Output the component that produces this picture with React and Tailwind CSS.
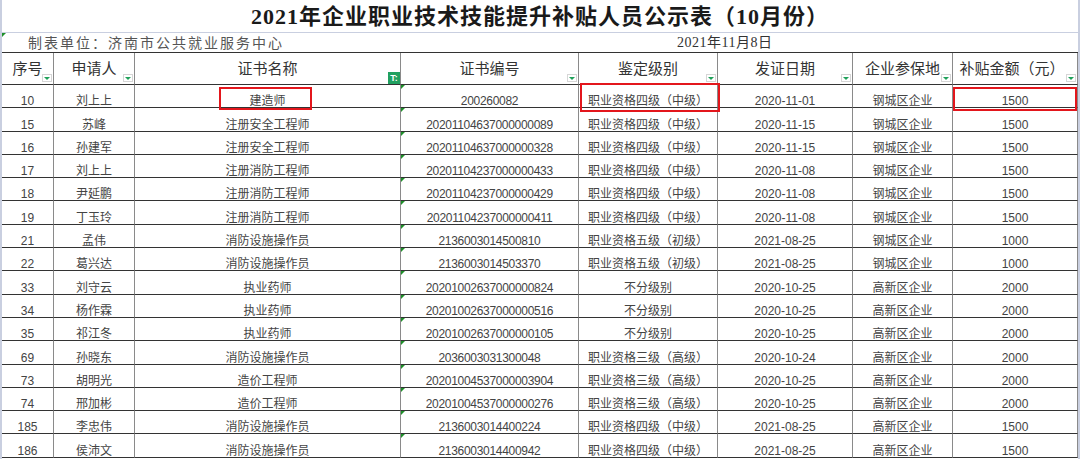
import React from 'react';

const cols = ['序号', '申请人', '证书名称', '证书编号', '鉴定级别', '发证日期', '企业参保地', '补贴金额（元）'];

const rows = [
  ['10', '刘上上', '建造师', '200260082', '职业资格四级（中级）', '2020-11-01', '钢城区企业', '1500'],
  ['15', '苏峰', '注册安全工程师', '20201104637000000089', '职业资格四级（中级）', '2020-11-15', '钢城区企业', '1500'],
  ['16', '孙建军', '注册安全工程师', '20201104637000000328', '职业资格四级（中级）', '2020-11-15', '钢城区企业', '1500'],
  ['17', '刘上上', '注册消防工程师', '20201104237000000433', '职业资格四级（中级）', '2020-11-08', '钢城区企业', '1500'],
  ['18', '尹延鹏', '注册消防工程师', '20201104237000000429', '职业资格四级（中级）', '2020-11-08', '钢城区企业', '1500'],
  ['19', '丁玉玲', '注册消防工程师', '20201104237000000411', '职业资格四级（中级）', '2020-11-08', '钢城区企业', '1500'],
  ['21', '孟伟', '消防设施操作员', '2136003014500810', '职业资格五级（初级）', '2021-08-25', '钢城区企业', '1000'],
  ['22', '葛兴达', '消防设施操作员', '2136003014503370', '职业资格五级（初级）', '2021-08-25', '钢城区企业', '1000'],
  ['33', '刘守云', '执业药师', '20201002637000000824', '不分级别', '2020-10-25', '高新区企业', '2000'],
  ['34', '杨作霖', '执业药师', '20201002637000000516', '不分级别', '2020-10-25', '高新区企业', '2000'],
  ['35', '祁江冬', '执业药师', '20201002637000000105', '不分级别', '2020-10-25', '高新区企业', '2000'],
  ['69', '孙晓东', '消防设施操作员', '2036003031300048', '职业资格三级（高级）', '2020-10-24', '高新区企业', '2000'],
  ['73', '胡明光', '造价工程师', '20201004537000003904', '职业资格三级（高级）', '2020-10-25', '高新区企业', '2000'],
  ['74', '邢加彬', '造价工程师', '20201004537000000276', '职业资格三级（高级）', '2020-10-25', '高新区企业', '2000'],
  ['185', '李忠伟', '消防设施操作员', '2136003014400224', '职业资格四级（中级）', '2021-08-25', '高新区企业', '1500'],
  ['186', '侯沛文', '消防设施操作员', '2136003014400942', '职业资格四级（中级）', '2021-08-25', '高新区企业', '1500'],
];

const grid = 'grid grid-cols-[52px_81px_266px_178px_139px_135px_100px_125px]';
const sans = { fontFamily: '"Liberation Sans", "Noto Sans CJK SC", sans-serif' };

// little green "number stored as text" flag
const Flag = ({ className = '' }) => (
  <span className={`absolute w-0 h-0 border-t-[4px] border-r-[4px] border-t-[#1f8f2a] border-r-transparent ${className}`}></span>
);

const FilterBtn = () => (
  <span className="absolute right-[1px] bottom-[2px] w-[10px] h-[8px] border border-[#d6d6d6] bg-white flex items-center justify-center">
    <span className="w-0 h-0 border-l-[3px] border-r-[3px] border-t-[3px] border-l-transparent border-r-transparent border-t-[#20a15a]"></span>
  </span>
);

export default function App() {
  return (
    <div
      className="relative w-[1080px] h-[459px] overflow-hidden bg-white border-l-2 border-r-2 border-[#c9cfe0] text-[#333]"
      style={sans}
    >
      {/* title */}
      <div className="h-[33px] flex items-center justify-center border-b border-[#c9cfe0]">
        <h1
          className="text-[22px] font-bold tracking-[1px] text-[#1a1a1a] leading-none pt-[2px]"
          style={{ fontFamily: '"Liberation Serif", "Noto Sans CJK SC", serif' }}
        >
          2021年企业职业技术技能提升补贴人员公示表（10月份）
        </h1>
      </div>

      {/* unit + date */}
      <div className="relative h-[19px] flex items-center text-[14px] leading-none">
        <Flag className="left-0 top-0" />
        <span className="w-[675px] pl-[26px] tracking-[2px] text-[#555]">制表单位：济南市公共就业服务中心</span>
        <span className="tracking-[0.5px]" style={{ fontFamily: '"Liberation Serif", "Noto Sans CJK SC", serif' }}>
          2021年11月8日
        </span>
      </div>

      {/* header */}
      <div className={`${grid} h-[33px] border-t border-[#333]`}>
        {cols.map((c, i) => (
          <div
            key={c}
            className="relative flex items-center justify-center border-r border-b border-r-[#8a8a8a] border-b-[#333] text-[15px] leading-none"
          >
            <span className={i === 7 ? 'pr-[6px]' : ''}>{c}</span>
            {i === 2 ? (
              <span className="absolute right-0 bottom-0 w-[12px] h-[12px] bg-[#21a060] text-white text-[9px] font-bold leading-none flex items-center justify-center">
                T:
              </span>
            ) : (
              <FilterBtn />
            )}
          </div>
        ))}
      </div>

      {/* data rows */}
      {rows.map((r, ri) => (
        <div key={ri} className={`${grid} h-[23.3px]`}>
          {r.map((v, ci) => (
            <div
              key={ci}
              className="relative flex items-end justify-center border-r border-b border-r-[#8a8a8a] border-b-[#333] text-[12px] leading-[11px] text-[#444] whitespace-nowrap"
            >
              {ci === 3 && <Flag className="left-0 top-0" />}
              <span className={ci === 3 ? 'tracking-[-0.3px]' : ''}>{v}</span>
            </div>
          ))}
        </div>
      ))}

      {/* row 22 selection mark on the left edge */}
      <div className="absolute left-[-2px] top-[252px] w-[2px] h-[19px] bg-[#3ccf8e]"></div>

      {/* red highlight boxes */}
      <div className="absolute left-[217px] top-[87px] w-[93px] h-[23px] border-2 border-[#e3161c]"></div>
      <div className="absolute left-[578px] top-[83px] w-[140px] h-[29px] border-2 border-[#e3161c]"></div>
      <div className="absolute left-[951px] top-[87px] w-[124px] h-[24px] border-2 border-[#e3161c]"></div>
    </div>
  );
}
